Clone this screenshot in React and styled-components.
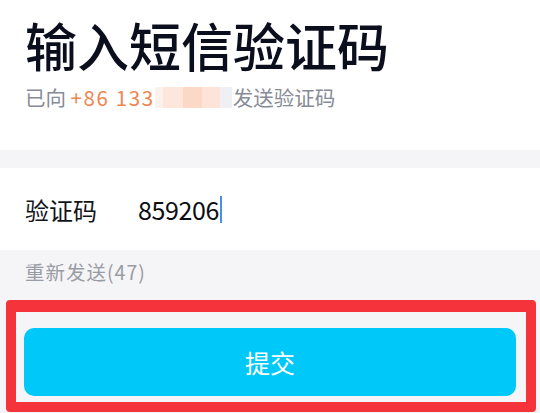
import React from 'react'
import styled, { createGlobalStyle } from 'styled-components'

const GlobalStyle = createGlobalStyle`
  html, body {
    margin: 0;
    padding: 0;
    background: #ffffff;
    font-family: "Noto Sans CJK SC", "Noto Sans", sans-serif;
  }
`

const Page = styled.div`
  width: 540px;
  height: 413px;
  overflow: hidden;
  display: flex;
  flex-direction: column;
  background: #ffffff;
`

const Header = styled.div`
  padding: 19px 25px 0 25px;
  height: 150px;
  box-sizing: border-box;
`

const Title = styled.h1`
  margin: 0;
  font-size: 52px;
  line-height: 52px;
  font-weight: 500;
  color: #0b0f1d;
`

const Sub = styled.div`
  margin-top: 14px;
  font-size: 20.5px;
  line-height: 24px;
  color: #878b97;
  display: flex;
  align-items: center;
  white-space: pre;
`

const Phone = styled.span`
  color: #ef8651;
  letter-spacing: 1.6px;
`

const Mosaic = styled.span`
  display: inline-flex;
  height: 21px;
  margin: 0 1px 0 0;
`

const Tile = styled.span`
  display: inline-block;
  width: ${(p) => p.w}px;
  height: 100%;
  background: ${(p) => p.c};
`

const Band = styled.div`
  height: 18px;
  background: #f5f5f7;
`

const InputRow = styled.div`
  height: 82px;
  display: flex;
  align-items: center;
  padding: 0 25px;
  background: #ffffff;
`

const Label = styled.span`
  width: 113px;
  font-size: 24px;
  color: #111318;
`

const Value = styled.span`
  font-size: 25px;
  color: #0c0e14;
  display: flex;
  align-items: center;
  letter-spacing: -0.4px;
`

const Caret = styled.span`
  display: inline-block;
  width: 2px;
  height: 27px;
  margin-left: 1px;
  background: #4b8fe8;
`

const Footer = styled.div`
  flex: 1;
  background: #f5f5f7;
  display: flex;
  flex-direction: column;
`

const Resend = styled.div`
  padding: 11px 25px 0 25px;
  font-size: 19.5px;
  line-height: 22px;
  color: #9a9ca4;
  letter-spacing: 1px;
`

const Highlight = styled.div`
  margin: 17px 0 0 6px;
  width: 530px;
  height: 112px;
  box-sizing: border-box;
  border: 10px solid #f4333a;
  border-top-width: 12px;
  border-radius: 4px;
  padding: 16px 10px 0 8px;
`

const SubmitButton = styled.button`
  width: 100%;
  height: 68px;
  border: none;
  border-radius: 10px;
  background: #00c9fa;
  color: #ffffff;
  font-family: inherit;
  font-size: 25px;
  display: flex;
  align-items: center;
  justify-content: center;
  cursor: pointer;
`

const tiles = [
  { w: 8, c: '#fdf1ec' },
  { w: 20, c: '#fde6dc' },
  { w: 19, c: '#fcd8c7' },
  { w: 18, c: '#fde3d8' },
  { w: 12, c: '#eef0f3' },
]

export default function App() {
  return (
    <Page>
      <GlobalStyle />
      <Header>
        <Title>输入短信验证码</Title>
        <Sub>
          已向 <Phone>+86 133</Phone>
          <Mosaic>
            {tiles.map((t, i) => (
              <Tile key={i} w={t.w} c={t.c} />
            ))}
          </Mosaic>
          发送验证码
        </Sub>
      </Header>
      <Band />
      <InputRow>
        <Label>验证码</Label>
        <Value>
          859206
          <Caret />
        </Value>
      </InputRow>
      <Footer>
        <Resend>重新发送(47)</Resend>
        <Highlight>
          <SubmitButton>提交</SubmitButton>
        </Highlight>
      </Footer>
    </Page>
  )
}
